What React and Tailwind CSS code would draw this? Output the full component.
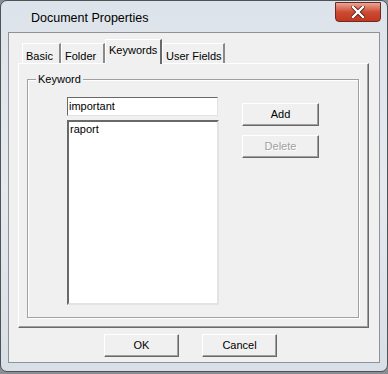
import React from 'react';

const font = { fontFamily: '"Liberation Sans", Arial, sans-serif' };

function Btn({ children, disabled = false, className = '' }) {
  return (
    <div
      className={`flex items-center justify-center bg-[#f0f0f0] border border-t-white border-l-white border-r-[#696969] border-b-[#696969] shadow-[inset_-1px_-1px_0_#a0a0a0] text-[11px] ${
        disabled ? 'text-[#a0a0a0] [text-shadow:1px_1px_0_#ffffff]' : 'text-black'
      } ${className}`}
    >
      {children}
    </div>
  );
}

function Tab({ label, active = false, className = '' }) {
  if (active) {
    return (
      <div className={`h-[25px] -mb-[1px] relative z-10 bg-[#f0f0f0] border-l border-t border-l-white border-t-white border-r-2 border-r-[#696969] flex items-start pt-[2px] px-[3px] text-[11px] whitespace-nowrap ${className}`}>
        {label}
      </div>
    );
  }
  return (
    <div className={`h-[20px] border-l border-t border-l-white border-t-white border-r-2 border-r-[#8a8a8a] flex items-start pt-[4px] px-[3px] text-[11px] whitespace-nowrap ${className}`}>
      {label}
    </div>
  );
}

export default function App() {
  return (
    <div className="w-[388px] h-[374px] bg-[#8a8e93]" style={font}>
      {/* window frame */}
      <div className="w-[388px] h-[372px] rounded-[7px] border border-[#4e5358] bg-gradient-to-b from-[#dde3ea] via-[#e6eaef] to-[#d9dfe6] flex flex-col">
        {/* title bar */}
        <div className="h-[31px] flex items-start justify-between">
          <div className="pt-[8px] pl-[30px] text-[12.5px] text-black">Document Properties</div>
          <div className="mt-[1px] mr-[6px] w-[46px] h-[20px] rounded-b-[4px] border border-[#6b2a22] bg-gradient-to-b from-[#e9a494] via-[#cc4b32] to-[#c2361e] flex items-center justify-center">
            <svg width="14" height="12" viewBox="0 0 14 12">
              <path d="M2 1 L12 11 M12 1 L2 11" stroke="#4a1a12" strokeWidth="4" strokeLinecap="square" />
              <path d="M2 1 L12 11 M12 1 L2 11" stroke="#ffffff" strokeWidth="2.4" strokeLinecap="square" />
            </svg>
          </div>
        </div>

        {/* client area */}
        <div className="mx-[7px] h-[331px] bg-[#f0f0f0] border border-[#8d9399] flex flex-col">
          <div className="pl-[9px] pr-[12px] pt-[5px]">
            {/* tabs */}
            <div className="flex items-end pl-[4px] h-[25px]">
              <Tab label="Basic" className="w-[39px]" />
              <Tab label="Folder" className="w-[44px]" />
              <Tab label="Keywords" active className="w-[57px]" />
              <Tab label="User Fields" className="w-[63px]" />
            </div>

            {/* tab panel */}
            <div className="w-[351px] h-[265px] border border-t-white border-l-white border-r-[#696969] border-b-[#696969] shadow-[inset_-1px_-1px_0_#a0a0a0] pl-[8px] pt-[15px]">
              {/* group box */}
              <div className="relative w-[332px] h-[239px] border border-[#a0a0a0] shadow-[1px_1px_0_#ffffff,inset_1px_1px_0_#ffffff]">
                <div className="absolute left-[8px] -top-[7px] px-[2px] bg-[#f0f0f0] text-[11px] leading-[13px]">Keyword</div>
                <div className="flex pl-[39px] pt-[17px]">
                  <div className="flex flex-col">
                    <div className="w-[151px] h-[19px] bg-white border border-t-[#696969] border-l-[#696969] border-r-[#e3e3e3] border-b-[#e3e3e3] text-[11px] pl-[1px] leading-[17px]">
                      important
                    </div>
                    <div className="mt-[4px] w-[152px] h-[185px] bg-white border-2 border-t-[#696969] border-l-[#696969] border-r-[#e3e3e3] border-b-[#e3e3e3] text-[11px] pl-[1px] leading-[14px]">
                      raport
                    </div>
                  </div>
                  <div className="flex flex-col pl-[23px] pt-[6px] gap-[9px]">
                    <Btn className="w-[77px] h-[23px]">Add</Btn>
                    <Btn disabled className="w-[77px] h-[23px]">Delete</Btn>
                  </div>
                </div>
              </div>
            </div>
          </div>

          {/* OK / Cancel */}
          <div className="flex pl-[95px] pt-[6px] gap-[23px]">
            <Btn className="w-[75px] h-[23px]">OK</Btn>
            <Btn className="w-[75px] h-[23px]">Cancel</Btn>
          </div>
        </div>
      </div>
    </div>
  );
}
